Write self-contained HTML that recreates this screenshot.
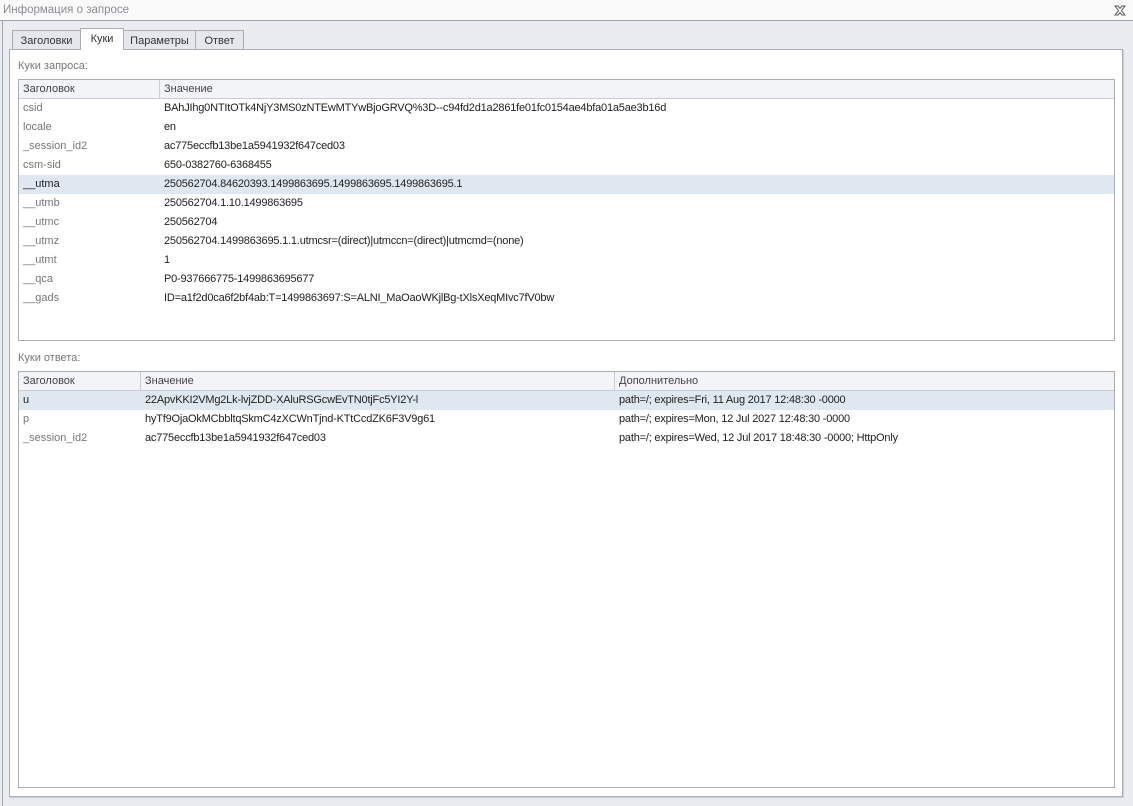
<!DOCTYPE html>
<html><head><meta charset="utf-8"><style>
*{margin:0;padding:0;box-sizing:border-box}
body{width:1133px;height:806px;background:#e9ecf0;font-family:"Liberation Sans","DejaVu Sans",sans-serif;font-size:11px;color:#222;position:relative;overflow:hidden}
.abs{position:absolute}
.title{left:0;top:0;width:1133px;height:21px;background:#fafafa;border-bottom:1px solid #a0a4aa}
.title span{position:absolute;left:3px;top:4px;color:#8a8e94;font-size:11.5px}
.frame{left:2px;top:21px;width:1131px;height:785px;border-left:1px solid #a0a4aa}
.tab{top:30px;height:20px;background:#e4e7ec;border:1px solid #a9aeb5;border-bottom:none;padding:4px 0 0 0;text-align:center;color:#333;font-size:11px}
.tab.act{top:28px;height:22px;background:#fff;z-index:2}
.panel{left:9px;top:49px;width:1114px;height:748px;background:#fff;border:1px solid #a9aeb5;box-shadow:1px 1px 1px #c8ccd2}
.lbl{color:#777;font-size:11px}
.grid{border:1px solid #a9aeb5;background:#fff}
.hdr{position:absolute;left:0;top:0;right:0;height:19px;background:#f3f4f7;border-bottom:1px solid #c9ccd1}
.hdr div{position:absolute;top:0;height:19px;padding:3px 0 0 4px;color:#444;border-right:1px solid #c9ccd1}
.row{position:absolute;left:0;right:0;height:19px}
.row.sel{background:#dfe7f0}
.row div{position:absolute;top:3px;white-space:nowrap;letter-spacing:-0.2px}
.row .k{color:#777;letter-spacing:0}
.row.sel .k{color:#222}
</style></head><body>
<div class="abs title"><span>Информация о запросе</span>
<svg style="position:absolute;left:1114px;top:5px" width="12" height="11" viewBox="0 0 12 11"><path d="M1 1 L4 1 L6 3.5 L8 1 L11 1 L7.5 5.5 L11 10 L8 10 L6 7.5 L4 10 L1 10 L4.5 5.5 Z" fill="#fff" stroke="#555" stroke-width="1"/></svg>
</div>
<div class="abs frame"></div>
<div class="abs tab" style="left:12px;width:69px">Заголовки</div>
<div class="abs tab act" style="left:80px;width:44px">Куки</div>
<div class="abs tab" style="left:123px;width:73px">Параметры</div>
<div class="abs tab" style="left:195px;width:49px">Ответ</div>
<div class="abs panel"></div>
<div class="abs lbl" style="left:18px;top:60px">Куки запроса:</div>
<div class="abs grid" style="left:18px;top:79px;width:1097px;height:262px">
<div class="hdr"><div style="left:0;width:141px">Заголовок</div><div style="left:141px;width:0;border:none">Значение</div></div>
<div class="row" style="top:19px"><div class="k" style="left:4px">csid</div><div style="left:145px">BAhJIhg0NTItOTk4NjY3MS0zNTEwMTYwBjoGRVQ%3D--c94fd2d1a2861fe01fc0154ae4bfa01a5ae3b16d</div></div>
<div class="row" style="top:38px"><div class="k" style="left:4px">locale</div><div style="left:145px">en</div></div>
<div class="row" style="top:57px"><div class="k" style="left:4px">_session_id2</div><div style="left:145px">ac775eccfb13be1a5941932f647ced03</div></div>
<div class="row" style="top:76px"><div class="k" style="left:4px">csm-sid</div><div style="left:145px">650-0382760-6368455</div></div>
<div class="row sel" style="top:95px"><div class="k" style="left:4px">__utma</div><div style="left:145px">250562704.84620393.1499863695.1499863695.1499863695.1</div></div>
<div class="row" style="top:114px"><div class="k" style="left:4px">__utmb</div><div style="left:145px">250562704.1.10.1499863695</div></div>
<div class="row" style="top:133px"><div class="k" style="left:4px">__utmc</div><div style="left:145px">250562704</div></div>
<div class="row" style="top:152px"><div class="k" style="left:4px">__utmz</div><div style="left:145px">250562704.1499863695.1.1.utmcsr=(direct)|utmccn=(direct)|utmcmd=(none)</div></div>
<div class="row" style="top:171px"><div class="k" style="left:4px">__utmt</div><div style="left:145px">1</div></div>
<div class="row" style="top:190px"><div class="k" style="left:4px">__qca</div><div style="left:145px">P0-937666775-1499863695677</div></div>
<div class="row" style="top:209px"><div class="k" style="left:4px">__gads</div><div style="left:145px">ID=a1f2d0ca6f2bf4ab:T=1499863697:S=ALNI_MaOaoWKjlBg-tXlsXeqMIvc7fV0bw</div></div>
</div>
<div class="abs lbl" style="left:18px;top:352px">Куки ответа:</div>
<div class="abs grid" style="left:18px;top:371px;width:1097px;height:417px">
<div class="hdr"><div style="left:0;width:122px">Заголовок</div><div style="left:122px;width:474px">Значение</div><div style="left:596px;width:0;border:none">Дополнительно</div></div>
<div class="row sel" style="top:19px"><div class="k" style="left:4px">u</div><div style="left:126px">22ApvKKI2VMg2Lk-lvjZDD-XAluRSGcwEvTN0tjFc5YI2Y-l</div><div style="left:600px">path=/; expires=Fri, 11 Aug 2017 12:48:30 -0000</div></div>
<div class="row" style="top:38px"><div class="k" style="left:4px">p</div><div style="left:126px">hyTf9OjaOkMCbbltqSkmC4zXCWnTjnd-KTtCcdZK6F3V9g61</div><div style="left:600px">path=/; expires=Mon, 12 Jul 2027 12:48:30 -0000</div></div>
<div class="row" style="top:57px"><div class="k" style="left:4px">_session_id2</div><div style="left:126px">ac775eccfb13be1a5941932f647ced03</div><div style="left:600px">path=/; expires=Wed, 12 Jul 2017 18:48:30 -0000; HttpOnly</div></div>
</div>
</body></html>
